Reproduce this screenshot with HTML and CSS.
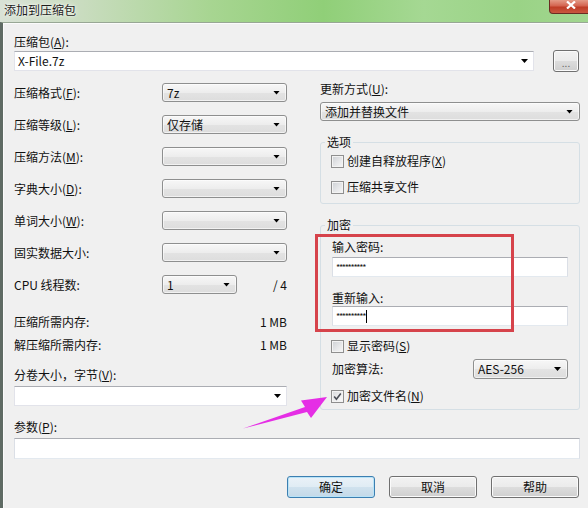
FILE: index.html
```html
<!DOCTYPE html>
<html>
<head>
<meta charset="utf-8">
<title>添加到压缩包</title>
<link rel="stylesheet" href="styles.css">
</head>
<body>
<div class="window">
  <div class="titlebar">
    <span class="title">添加到压缩包</span>
    <div class="close"><svg width="10" height="8" viewBox="0 0 10 8"><path d="M1 0.5L9 7.5M9 0.5L1 7.5" stroke="#fff" stroke-width="2.2" fill="none"/></svg></div>
  </div>
  <div class="client">
    <div class="lbl">压缩包(<u>A</u>):</div>
    <div class="archive-row">
      <div class="ecombo"><span>X-File.7z</span><i class="arrow"></i></div>
      <div class="btn dots">...</div>
    </div>

    <div class="cols">
      <div class="left">
        <div class="frow"><span class="flabel">压缩格式(<u>F</u>):</span><div class="combo"><span>7z</span><i class="arrow"></i></div></div>
        <div class="frow"><span class="flabel">压缩等级(<u>L</u>):</span><div class="combo"><span>仅存储</span><i class="arrow"></i></div></div>
        <div class="frow"><span class="flabel">压缩方法(<u>M</u>):</span><div class="combo"><span></span><i class="arrow"></i></div></div>
        <div class="frow"><span class="flabel">字典大小(<u>D</u>):</span><div class="combo"><span></span><i class="arrow"></i></div></div>
        <div class="frow"><span class="flabel">单词大小(<u>W</u>):</span><div class="combo"><span></span><i class="arrow"></i></div></div>
        <div class="frow"><span class="flabel">固实数据大小:</span><div class="combo"><span></span><i class="arrow"></i></div></div>
        <div class="frow"><span class="flabel">CPU 线程数:</span><div class="combo cpu"><span>1</span><i class="arrow"></i></div><span class="of">/ 4</span></div>
        <div class="mrow mem1"><span>压缩所需内存:</span><span>1 MB</span></div>
        <div class="mrow mem2"><span>解压缩所需内存:</span><span>1 MB</span></div>
        <div class="lbl vol">分卷大小，字节(<u>V</u>):</div>
        <div class="ecombo vol-combo"><span></span><i class="arrow"></i></div>
      </div>

      <div class="right">
        <div class="lbl">更新方式(<u>U</u>):</div>
        <div class="combo update"><span>添加并替换文件</span><i class="arrow"></i></div>

        <fieldset class="group opts">
          <legend>选项</legend>
          <div class="chk"><i class="box"></i><span>创建自释放程序(<u>X</u>)</span></div>
          <div class="chk second"><i class="box"></i><span>压缩共享文件</span></div>
        </fieldset>

        <fieldset class="group enc">
          <legend>加密</legend>
          <div class="lbl in">输入密码:</div>
          <div class="input pw first"><span class="stars">**********</span></div>
          <div class="lbl in again">重新输入:</div>
          <div class="input pw"><span class="stars">**********</span><i class="caret"></i></div>
          <div class="chk show"><i class="box"></i><span>显示密码(<u>S</u>)</span></div>
          <div class="algo"><span class="in">加密算法:</span><div class="combo aes"><span>AES-256</span><i class="arrow"></i></div></div>
          <div class="chk names"><i class="box checked"><svg width="11" height="11" viewBox="0 0 11 11"><path d="M2.2 5.6L4.4 8.2L8.8 2.4" stroke="#4b4f57" stroke-width="1.6" fill="none"/></svg></i><span>加密文件名(<u>N</u>)</span></div>
        </fieldset>
      </div>
    </div>

    <div class="lbl params-label">参数(<u>P</u>):</div>
    <div class="input params"></div>

    <div class="buttons">
      <div class="btn default">确定</div>
      <div class="btn">取消</div>
      <div class="btn">帮助</div>
    </div>
  </div>
</div>

<div class="highlight"></div>
<svg class="annot" width="588" height="508" viewBox="0 0 588 508">
  <polygon points="243,428.5 305,407 301,400.5 327,397 311,418 307,412" fill="#e52ee5"/>
</svg>
</body>
</html>
```

FILE: styles.css
```css
* { box-sizing: border-box; }
html, body { margin: 0; padding: 0; }
body {
  width: 588px;
  height: 508px;
  overflow: hidden;
  position: relative;
  font-family: "Noto Sans CJK SC", "Noto Sans", sans-serif;
  font-size: 12px;
  line-height: 16px;
  color: #111;
  background: #f0f0f0;
}
u { text-decoration: underline; text-underline-offset: 1px; }

.window {
  width: 588px;
  height: 508px;
  display: flex;
  flex-direction: column;
}

.titlebar {
  height: 22px;
  flex: none;
  display: flex;
  justify-content: space-between;
  align-items: flex-start;
  background: linear-gradient(90deg, #d9e2d6 0%, #c9dcbf 14%, #a7d591 36%, #90cf78 55%, #a5d893 72%, #9ad386 88%, #a2d690 100%);
}
.title {
  padding-left: 4px;
  line-height: 20px;
  color: #1c1c1c;
  text-shadow: 0 0 5px rgba(255,255,255,.9), 0 0 2px rgba(255,255,255,.9);
}
.close {
  width: 43px;
  height: 14px;
  margin-right: -4px;
  border: 1px solid #6a2c22;
  border-top: 0;
  border-radius: 0 0 4px 4px;
  background: linear-gradient(#e49a86 0%, #d46450 45%, #bf3c26 55%, #c85840 100%);
  display: flex;
  justify-content: center;
  align-items: flex-start;
  padding-top: 1px;
}

.client {
  flex: 1;
  background: #f0f0f0;
  border-top: 1px solid #98a795;
  border-left: 3px solid #5f6b64;
  box-shadow: inset 1px 1px 0 #fbfbfb;
  padding: 11px 8px 0 11px;
  display: flex;
  flex-direction: column;
}

.lbl { height: 16px; white-space: nowrap; }

.arrow {
  display: block;
  width: 7px;
  height: 4px;
  background: #000;
  clip-path: polygon(0 0, 100% 0, 50% 100%);
  flex: none;
}

.ecombo {
  height: 20px;
  background: #fff;
  border: 1px solid #e2e3ea;
  border-top-color: #abadb3;
  display: flex;
  align-items: center;
  justify-content: space-between;
  padding: 0 5px 0 3px;
}

.combo {
  height: 19px;
  border: 1px solid #8e8f8f;
  border-radius: 3px;
  background: linear-gradient(#f7f7f7 0%, #ededed 50%, #e3e3e3 51%, #dddddd 100%);
  box-shadow: inset 0 0 0 1px rgba(255,255,255,.6);
  display: flex;
  align-items: center;
  justify-content: space-between;
  padding: 0 6px 0 4px;
  white-space: nowrap;
}

.archive-row {
  display: flex;
  align-items: center;
  height: 22px;
}
.archive-row .ecombo { flex: 1; }

.btn {
  height: 22px;
  border: 1px solid #707070;
  border-radius: 3px;
  background: linear-gradient(#f2f2f2 0%, #ebebeb 49%, #dddddd 50%, #cfcfcf 100%);
  box-shadow: inset 0 0 0 1px #fbfbfb;
  display: flex;
  align-items: center;
  justify-content: center;
}
.dots {
  width: 26px;
  margin-left: 19px;
  margin-right: 1px;
  color: #666;
  font-size: 10px;
  align-items: flex-end;
  padding-bottom: 3px;
  line-height: 10px;
}

.cols {
  display: flex;
  gap: 33px;
  margin-top: 9px;
}
.left {
  width: 273px;
  padding-top: 2px;
  display: flex;
  flex-direction: column;
}
.right {
  width: 260px;
  display: flex;
  flex-direction: column;
}

.frow {
  display: flex;
  align-items: center;
  height: 19px;
}
.frow + .frow { margin-top: 13px; }
.flabel { width: 148px; flex: none; white-space: nowrap; }
.frow .combo { flex: 1; }
.frow .combo.cpu { flex: none; width: 75px; }
.of { margin-left: auto; }

.mrow {
  display: flex;
  justify-content: space-between;
  height: 16px;
}
.mem1 { margin-top: 20px; }
.mem2 { margin-top: 7px; }
.vol { margin-top: 14px; }
.vol-combo { margin-top: 3px; }

.update { margin-top: 5px; }

.group {
  margin: 0;
  min-width: 0;
  border: 1px solid #d5dfe5;
  border-radius: 3px;
  padding: 3px 11px 8px 10px;
}
.group legend {
  padding: 0 2px;
  margin-left: -6px;
  line-height: 16px;
}
.opts { margin-top: 13px; }
.enc { margin-top: 13px; padding-top: 6px; padding-bottom: 5px; }

.chk {
  display: flex;
  align-items: center;
  height: 16px;
  gap: 3px;
  white-space: nowrap;
}
.chk.second { margin-top: 10px; }
.box {
  width: 13px;
  height: 13px;
  flex: none;
  border: 1px solid #8f8f8f;
  background: linear-gradient(135deg, #cdd0d4 0%, #e6e7e9 55%, #f7f7f7 100%);
  box-shadow: inset 0 0 0 1px #f3f3f3;
  display: flex;
  align-items: center;
  justify-content: center;
}
.box.checked { background: linear-gradient(135deg, #d7d9dc 0%, #eeeeef 55%, #fbfbfb 100%); }

.in { margin-left: 1px; }
.input {
  height: 20px;
  background: #fff;
  border: 1px solid #dbdfe6;
  border-top-color: #abadb3;
  border-bottom-color: #e3e9ef;
  display: flex;
  align-items: center;
  padding-left: 3px;
}
.pw { margin-left: 1px; }
.pw.first { margin-top: 2px; }
.again { margin-top: 13px; }
.stars {
  font-size: 9px;
  letter-spacing: -1.3px;
  line-height: 10px;
  color: #222;
  padding-top: 1px;
}
.caret {
  display: block;
  width: 1px;
  height: 13px;
  background: #000;
  margin-left: 1px;
}
.chk.show { margin-top: 12px; }
.algo {
  margin-top: 5px;
  height: 20px;
  display: flex;
  align-items: center;
  justify-content: space-between;
}
.combo.aes { width: 95px; height: 20px; }
.chk.names { margin-top: 9px; }

.params-label { margin-top: 9px; }
.params { margin-top: 3px; height: 21px; }

.buttons {
  margin-top: 17px;
  display: flex;
  justify-content: flex-end;
  gap: 14px;
  padding-right: 1px;
}
.buttons .btn { width: 88px; }
.btn.default {
  border-color: #3c7fb1;
  background: linear-gradient(#eaf2f8 0%, #e0ecf4 49%, #d0e2ee 50%, #c4d9e8 100%);
  box-shadow: inset 0 0 0 1px #b9e3f7;
}

.highlight {
  position: absolute;
  left: 315px;
  top: 234px;
  width: 199px;
  height: 98px;
  border: 3px solid #d6434b;
  pointer-events: none;
}
.annot {
  position: absolute;
  left: 0;
  top: 0;
  pointer-events: none;
}
```
